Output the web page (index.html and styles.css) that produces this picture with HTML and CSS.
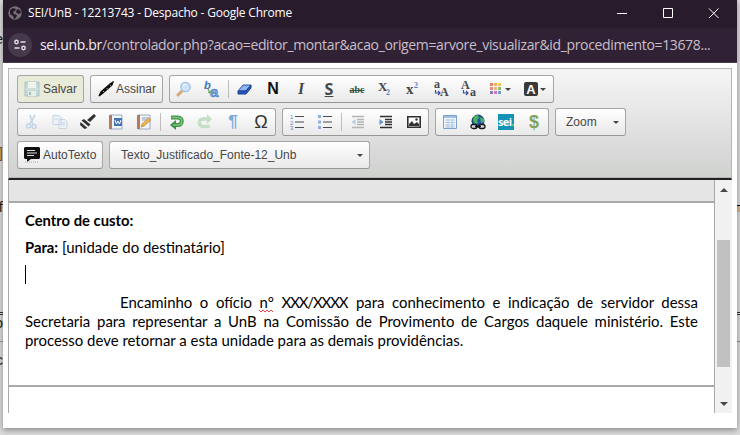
FILE: index.html
```html
<!DOCTYPE html>
<html lang="pt-BR">
<head>
<meta charset="utf-8">
<title>SEI/UnB - 12213743 - Despacho</title>
<link rel="stylesheet" href="styles.css">
</head>
<body>
<div class="behind">
  <span class="frag f1">e</span><span class="frag f2">]</span><span class="frag f3">f</span>
  <span class="rule r1"></span><span class="rule r2"></span><span class="frag f4">o</span><span class="rule r3"></span><span class="frag f5">c</span>
  <span class="edge e1"></span><span class="edge e2"></span><span class="edge e3"></span><span class="edge e4"></span>
</div>
<div class="window">
  <header class="titlebar">
    <svg class="favicon" width="14" height="14" viewBox="0 0 14 14"><circle cx="7" cy="7" r="6.7" fill="#777079"/><path d="M2 4l3-2 3 1-1 2-2 1 1 2 3 1-1 3-2 1-1-3-3-2zM9 3l3 1 1 3-3 1-2-2z" fill="#2a1c2e"/></svg>
    <span class="title">SEI/UnB - 12213743 - Despacho - Google Chrome</span>
    <svg class="controls" width="104" height="12" viewBox="0 0 104 12" fill="none" stroke="#fff" stroke-width="1"><path d="M1 6.500h10M47.500 1.500h9v9h-9zM93 1.500l9.500 9.500M102.500 1.500L93 11"/></svg>
  </header>
  <div class="address">
    <span class="site"><svg width="14" height="14" viewBox="0 0 14 14" fill="none" stroke="#e6dfe8" stroke-width="1.400"><circle cx="3.500" cy="4" r="1.700"/><path d="M7.500 4h5M1.500 10h5"/><circle cx="10.500" cy="10" r="1.700"/></svg></span>
    <span class="url"><b>sei.unb.br</b>/controlador.php?acao=editor_montar&amp;acao_origem=arvore_visualizar&amp;id_procedimento=13678...</span>
  </div>
  <main class="editor">
    <div class="toolbar">
      <div class="row">
        <div class="group save"><svg width="16" height="16" viewBox="0 0 16 16"><path d="M1 1h14v14H1z" fill="#c5d8d9" stroke="#aac3c8"/><path d="M4 1h8v6H4z" fill="#eef4ec"/><path d="M4 10h8v5H4z" fill="#e6eee6"/><path d="M1 8h14" stroke="#d8e4dd"/><path d="M5 11h2v3H5z" fill="#a4bcbc"/></svg><span>Salvar</span></div>
        <div class="group sign"><svg width="16" height="16" viewBox="0 0 16 16"><path d="M1 15l2-4L12 3l3-2-1 3-9 8z" fill="#0b0b0b" stroke="#111" stroke-width="1.300"/><path d="M5 10l2 2M8.500 7l1.500 1.500M12 4l1.500 1.500" stroke="#a9a875"/></svg><span>Assinar</span></div>
        <div class="group">
          <i class="btn"><svg width="16" height="16" viewBox="0 0 16 16"><path d="M2 14l4-4" stroke="#d9a776" stroke-width="3" stroke-linecap="round"/><circle cx="9.500" cy="6" r="4.600" fill="#cce5fa" stroke="#9dc0e8" stroke-width="1.400"/><path d="M7 5q1-2 3-2" stroke="#fff" fill="none"/></svg></i>
          <i class="btn"><svg width="18" height="18" viewBox="0 0 18 18"><text x="1" y="9" class="rb">b</text><text x="7" y="17" class="ra">a</text><path d="M5 9l2 4M7 13l-2-1M7 13l1-2" stroke="#549c43" fill="none"/></svg></i>
          <i class="sep"></i>
          <i class="btn"><svg width="16" height="16" viewBox="0 0 16 16"><path d="M6 4h8l-5 6H1z" fill="#8eb5f1" stroke="#3156a6"/><path d="M1 10h8l5-6v3l-5 6H1z" fill="#285bc2" stroke="#183d90"/></svg></i>
          <i class="btn bold">N</i><i class="btn ital">I</i><i class="btn under">S</i><i class="btn strike">abc</i>
          <i class="btn"><svg width="18" height="18" viewBox="0 0 18 18"><text x="2" y="11" class="sx">X</text><text x="10" y="15" class="sn">2</text></svg></i>
          <i class="btn"><svg width="18" height="18" viewBox="0 0 18 18"><text x="2" y="14" class="sx lower">x</text><text x="10" y="8" class="sn">2</text></svg></i>
          <i class="btn"><svg width="18" height="18" viewBox="0 0 18 18"><text x="2" y="8" class="cs">a</text><text x="8" y="16" class="cs">A</text><path d="M3.500 10v3h4M6 11l2 2-2 2" class="ar"/></svg></i>
          <i class="btn"><svg width="18" height="18" viewBox="0 0 18 18"><text x="1" y="9" class="cs">A</text><text x="10" y="16" class="cs">a</text><path d="M3.500 10v3h4M6 11l2 2-2 2" class="ar"/></svg></i>
          <i class="btn wide"><svg width="26" height="16" viewBox="0 0 26 16"><path d="M2 2h3v3H2z" fill="#e5846c"/><path d="M6 2h3v3H6z" fill="#efad62"/><path d="M10 2h3v3h-3z" fill="#e8c85d"/><path d="M2 6h3v3H2z" fill="#e58a86"/><path d="M6 6h3v3H6z" fill="#e7b486"/><path d="M10 6h3v3h-3z" fill="#8ac36b"/><path d="M2 10h3v3H2z" fill="#8a7ac2"/><path d="M6 10h3v3H6z" fill="#d476b4"/><path d="M10 10h3v3h-3z" fill="#659fd6"/><path d="M17 7h6l-3 3z" fill="#454545"/></svg></i>
          <i class="btn wide"><svg width="26" height="16" viewBox="0 0 26 16"><rect x="1" y="1" width="14" height="14" rx="2" fill="#393939"/><text x="3.300" y="12.500" class="la">A</text><path d="M17 7h6l-3 3z" fill="#454545"/></svg></i>
        </div>
      </div>
      <div class="row">
        <div class="group">
          <i class="btn"><svg width="16" height="16" viewBox="0 0 16 16" fill="none" stroke="#c4d5e6" stroke-width="1.600"><path d="M6 1l3 10M11 1L6 10"/><circle cx="4.500" cy="12" r="2"/><circle cx="10" cy="12.500" r="2"/></svg></i>
          <i class="btn"><svg width="16" height="16" viewBox="0 0 16 16" fill="#edf2f7" stroke="#c6d5e3"><path d="M1 1.500h6l2 2v7H1zM7 5.500h6l2 2v7H7z"/><path d="M9 9h4M9 11h4M3 5h3"/></svg></i>
          <i class="btn"><svg width="16" height="16" viewBox="0 0 16 16" fill="#333"><path d="M14 0l2 2-6 6-3-2zM4 5l6.500 5.500-2 2-7-6zM.5 8l7 6-3 1L0 11z"/></svg></i>
          <i class="btn"><svg width="16" height="16" viewBox="0 0 16 16"><path d="M2 1h12v14H2z" fill="#eef3fa" stroke="#9aabc3"/><path d="M1 1h3v14H1z" fill="#b57a5c"/><path d="M6 4h8v8H6z" fill="#4571b5"/><path d="M7 6l1.500 4L10 7l1.500 3L13 6" fill="none" stroke="#fff"/></svg></i>
          <i class="btn"><svg width="16" height="16" viewBox="0 0 16 16"><path d="M2 1h12v14H2z" fill="#f0f3f7" stroke="#9aabc3"/><path d="M1 1h3v14H1z" fill="#b57a5c"/><path d="M6 4h7M6 6h5" stroke="#8f9fb7"/><path d="M5 13l1-3 7-6 2 2-7 6z" fill="#efb64c" stroke="#b98334" stroke-width=".7"/></svg></i>
          <i class="sep"></i>
          <i class="btn"><svg width="16" height="16" viewBox="0 0 16 16" fill="none"><path d="M2 3.500h7c5 0 5 7.500 0 7.500H6" stroke="#3d934b" stroke-width="4"/><path d="M7 6v10L1 11z" fill="#3d934b"/><path d="M2.500 3.500H9c5 0 5 7.500 0 7.500H4" stroke="#7cc47a" stroke-width="1.700"/></svg></i>
          <i class="btn"><svg width="16" height="16" viewBox="0 0 16 16" fill="none"><path d="M13 12.500H6c-5 0-5-7.500 0-7.500h5" stroke="#c5e0c7" stroke-width="3.600"/><path d="M10 0v10L15 5z" fill="#c5e0c7"/></svg></i>
          <i class="btn para">¶</i><i class="btn omega">Ω</i>
        </div>
        <div class="group">
          <i class="btn"><svg width="16" height="16" viewBox="0 0 16 16"><path d="M6 2.500h9M6 8h9M6 13.500h9" stroke="#4c4c4c" stroke-width="1.200"/><g class="nums"><text x="1" y="5">1</text><text x="1" y="10.500">2</text><text x="1" y="16">3</text></g></svg></i>
          <i class="btn"><svg width="16" height="16" viewBox="0 0 16 16"><path d="M6 2.500h9M6 8h9M6 13.500h9" stroke="#4c4c4c" stroke-width="1.200"/><path d="M1 1h3v3H1zM1 6.500h3v3H1zM1 12h3v3H1z" fill="#8bb0dd"/></svg></i>
          <i class="sep"></i>
          <i class="btn"><svg width="16" height="16" viewBox="0 0 16 16"><path d="M2 2.500h12M7 5.500h7M7 8h7M7 10.500h7M2 13.500h12" stroke="#b4b4b4" stroke-width="1.300"/><path d="M5.500 5v6L1.500 8z" fill="#b9cbe1"/></svg></i>
          <i class="btn"><svg width="16" height="16" viewBox="0 0 16 16"><path d="M2 2.500h12M7 5.500h7M7 8h7M7 10.500h7M2 13.500h12" stroke="#303030" stroke-width="1.500"/><path d="M1.500 5v6l4-3z" fill="#5e8fd2"/></svg></i>
          <i class="btn"><svg width="16" height="16" viewBox="0 0 16 16"><path d="M1.800 2.800h12.400v10.400H1.800z" fill="#fff" stroke="#2f2f2f" stroke-width="1.600"/><path d="M3 12V10l3-3 2 3 3-2 2 2v2z" fill="#333"/><circle cx="10.500" cy="5.500" r="1.200" fill="#333"/></svg></i>
        </div>
        <div class="group">
          <i class="btn"><svg width="16" height="16" viewBox="0 0 16 16"><path d="M1.500 1.500h13v13h-13z" fill="#f4f9ff" stroke="#7c9fce"/><path d="M2 3h12" stroke="#a2bfe3" stroke-width="2"/><path d="M3 6h10M3 8.500h10M3 11h10M3 13h10M6 5v9M10 5v9" stroke="#a8c0df" stroke-width=".9"/></svg></i>
          <i class="btn"><svg width="16" height="16" viewBox="0 0 16 16"><circle cx="8" cy="7" r="6" fill="#2456a8" stroke="#18334a"/><path d="M4 2l4-1 1 3-2 2 1 3-3 1-2-4zM10 3l4 2v3l-3 1z" fill="#45b565"/><rect x="1" y="10.500" width="6" height="4" rx="2" fill="#ddd" stroke="#141414" stroke-width="1.300"/><rect x="9" y="10.500" width="6" height="4" rx="2" fill="#ddd" stroke="#141414" stroke-width="1.300"/><path d="M5 12.500h6" stroke="#111" stroke-width="1.500"/></svg></i>
          <i class="btn"><span class="sei">sei<em>.</em></span></i><i class="btn money">$</i>
        </div>
        <div class="group combo zoom"><span>Zoom</span><b class="caret-down"></b></div>
      </div>
      <div class="row">
        <div class="group auto"><svg width="16" height="16" viewBox="0 0 16 16"><path d="M1 0h14l1 1v10l-1 1H7l-4 3v-3H1l-1-1V1z" fill="#101010"/><path d="M3 3.500h8M3 6h10M3 8.500h7" stroke="#ddd"/><path d="M1 15h13" stroke="#aaa" stroke-dasharray="1 1"/></svg><span>AutoTexto</span></div>
        <div class="group combo style"><span>Texto_Justificado_Fonte-12_Unb</span><b class="caret-down"></b></div>
      </div>
    </div>
    <div class="viewport">
      <div class="document">
        <div class="gap"></div>
        <article class="page">
          <p><strong>Centro de custo:</strong></p>
          <p><strong>Para:</strong> [unidade do destinatário]</p>
          <p class="empty"><span class="cursor"></span></p>
          <div class="body"><span class="line first">Encaminho o ofício <span class="typo">n°<svg class="wave" width="14" height="4" viewBox="0 0 14 4"><path d="M0 1l2 2 2-2 2 2 2-2 2 2 2-2 2 2" fill="none" stroke="#e34242"/></svg></span> <span class="caps">XXX/XXXX</span> para conhecimento e indicação de servidor dessa</span>
          <span class="line">Secretaria para representar a UnB na Comissão de Provimento de Cargos daquele ministério. Este</span>
          <span class="line last">processo deve retornar a esta unidade para as demais providências.</span></div>
        </article>
        <div class="tail"></div>
      </div>
      <div class="scrollbar"><b class="up"></b><div class="thumb"></div><b class="down"></b></div>
    </div>
  </main>
</div>
</body>
</html>
```
FILE: styles.css
```css
* { box-sizing: border-box; }
body { margin: 0; width: 740px; height: 435px; overflow: hidden; background: #dcdcdc; font: 12px "Liberation Sans", sans-serif; position: relative; }
.behind { position: absolute; inset: 0; color: #222; }
.frag { position: absolute; font: 15px "Liberation Sans", sans-serif; width: 12px; text-align: right; left: -9px; line-height: 16px; }
.f1 { top: 31px; } .f2 { top: 145px; color: #8a4a20; } .f3 { top: 199px; } .f4 { top: 315px; } .f5 { top: 352px; }
.rule { position: absolute; left: 0; width: 3px; height: 1px; background: #333; }
.r1 { top: 312px; } .r2 { top: 314px; } .r3 { top: 341px; background: #999; }
.edge { position: absolute; right: 0; width: 3px; height: 1px; background: #555; }
.e1 { top: 205px; background: #111; } .e2 { top: 206px; height: 6px; background: #dfb48c; } .e3 { top: 312px; height: 3px; border: solid #333; border-width: 1px 0; background: none; } .e4 { top: 341px; background: #888; }
.window { position: relative; width: 734px; height: 428px; margin-left: 3px; background: #fff; box-shadow: 0 2px 6px rgba(0,0,0,.4); }
.titlebar { height: 28px; background: #281b2b; display: flex; align-items: center; padding: 0 17px 2px 5px; color: #fff; }
.title { margin-left: 6px; font: 12px/16px "Open Sans", sans-serif; letter-spacing: -.2px; white-space: nowrap; flex: 1; }
.address { height: 35px; background: #302135; border-bottom: 1px solid #493a4e; display: flex; align-items: center; padding: 0 5px; color: #c8bfca; }
.site { flex: none; width: 24px; height: 24px; border-radius: 50%; background: #47394c; display: flex; align-items: center; justify-content: center; }
.url { margin-left: 8px; font: 14px/20px "Open Sans", sans-serif; letter-spacing: -.35px; white-space: nowrap; }
.url b { font-weight: 400; color: #f2edf3; }
.editor { margin: 5px 5px 0; width: 724px; }
.toolbar { height: 112px; border: 1px solid #b6b6b6; border-bottom: 2px solid #231f23; background: linear-gradient(#f5f5f5, #cfd1cf); box-shadow: inset 0 -1px #b6b6b6; padding: 6px 8px; display: flex; flex-direction: column; gap: 5px; }
.row { display: flex; gap: 6px; }
.group { height: 28px; border: 1px solid #a6a6a6; border-bottom-color: #979797; border-radius: 3px; background: linear-gradient(#fff, #e9e9e9); display: flex; align-items: center; color: #474747; white-space: nowrap; }
.save { width: 67px; padding-left: 6px; gap: 3px; background: #e9ebd9; }
.sign { width: 73px; padding-left: 7px; gap: 2px; }
.auto { width: 86px; padding-left: 6px; gap: 3px; }
.btn { width: 28px; height: 26px; display: flex; align-items: center; justify-content: center; font-style: normal; flex: none; }
.btn.wide { width: 35px; }
.sep { width: 1px; height: 18px; margin: 0 2px; background: #bdbdbd; }
.bold { font: bold 16px "Liberation Sans", sans-serif; color: #111; }
.ital { font: italic bold 16px "Liberation Serif", serif; }
.under { font: bold 16px "Open Sans", sans-serif; text-decoration: underline; text-decoration-thickness: 1px; }
.strike { font: bold 10px "Liberation Serif", serif; color: #315746; text-decoration: line-through; }
.rb { font: italic bold 11px "Liberation Sans", sans-serif; fill: #3976b7; }
.ra { font: bold 15px "Liberation Sans", sans-serif; fill: #6aa7e2; stroke: #3976b7; stroke-width: .5px; }
.sx { font: bold 13px "Liberation Serif", serif; fill: #474747; }
.lower { font-size: 15px; }
.sn { font: bold 8px "Liberation Serif", serif; fill: #5384c8; }
.cs { font: bold 12px "Liberation Serif", serif; fill: #474747; }
.ar { fill: none; stroke: #3c4f9e; stroke-width: 1.2; }
.la { font: bold 13px "Liberation Sans", sans-serif; fill: #fff; }
.para { font: bold 17px "Liberation Sans", sans-serif; color: #79a9df; }
.omega { font: 18px "Liberation Sans", sans-serif; color: #333; }
.nums { font: 6px "Liberation Sans", sans-serif; fill: #608bc3; }
.sei { width: 16px; height: 16px; background: #1592b8; color: #fff; font: bold 11px/16px "Open Sans", sans-serif; letter-spacing: -.6px; overflow: hidden; }
.sei em { color: #b6d45b; font-style: normal; }
.money { font: bold 18px "Liberation Sans", sans-serif; color: #82a35a; }
.combo { justify-content: space-between; padding: 0 6px 0 10px; }
.zoom { width: 71px; }
.style { width: 261px; padding-left: 11px; }
.caret-down, .up, .down { width: 0; height: 0; border: 3px solid transparent; border-top-color: #474747; border-bottom: 0; }
.viewport { height: 233px; display: flex; }
.document { width: 707px; border: solid #a9a9a9; border-width: 0 1px; }
.gap { height: 23px; background: #e5e5e5; border-bottom: 2px solid #a9a9a9; }
.page { height: 184px; border-bottom: 2px solid #a9a9a9; padding: 8px 16px 0; font: 14.95px/19px Lato, sans-serif; color: #000; }
.page p { margin: 0 0 8px; height: 19px; }
.page strong { font-size: 14.8px; }
.cursor { display: block; width: 1px; height: 19px; background: #000; }
.body { margin-top: 9px; }
.line { display: block; text-align: justify; text-align-last: justify; white-space: nowrap; }
.first { padding-left: 95px; }
.caps { letter-spacing: -1.1px; margin-right: 1px; }
.last { text-align-last: left; }
.typo { position: relative; }
.wave { position: absolute; left: 0; bottom: -2px; }
.scrollbar { width: 17px; background: #f1f1f1; padding: 8px 2px 7px; display: flex; flex-direction: column; align-items: center; }
.up { border-width: 0 4px 4px; border-top: 0; border-bottom: 4px solid #474747; }
.thumb { width: 13px; height: 127px; margin-top: 48px; background: #c1c1c1; }
.down { border-width: 4px 4px 0; margin-top: auto; }
```
